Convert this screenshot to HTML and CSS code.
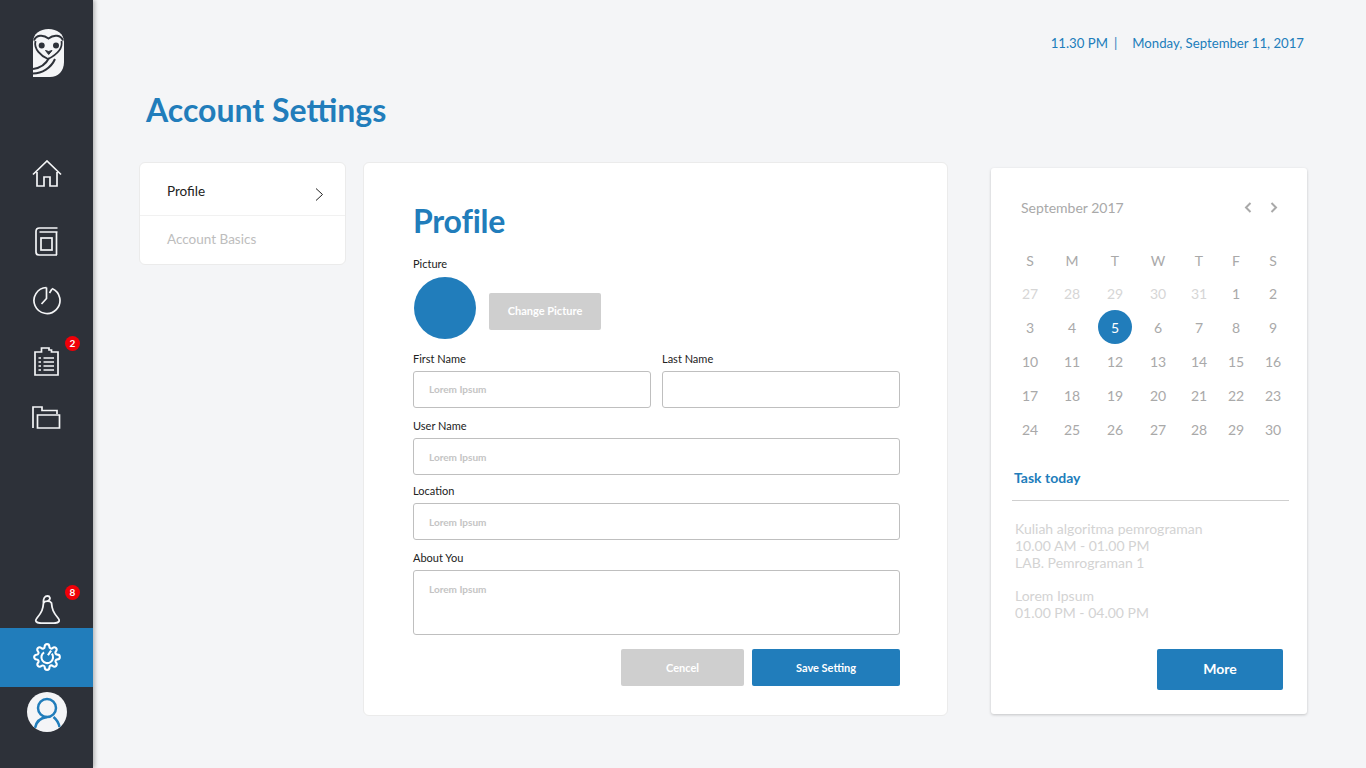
FILE: index.html
```html
<!DOCTYPE html>
<html lang="en">
<head>
    <meta charset="UTF-8">
    <title>Account Settings</title>
    <link rel="stylesheet" href="styles.css">
</head>
<body>
    <div class="app">
        <!-- Sidebar -->
        <aside class="sidebar">
            <div class="logo">
                <svg width="32" height="48" viewBox="0 0 32 48">
                    <path d="M0 13C0 5 7 0 15.500 0S31 5 31 13V33C31 42 25 48 17 48H0Z" fill="#f4f5f7"/>
                    <path d="M1 11.500C3 6 10 5 15.500 9.500C21 5 28 6 30 11.500" fill="none" stroke="#2d3139" stroke-width="2"/>
                    <path d="M2.500 12C0.500 20 8 27 15 30C23 26 30 20 28.500 12" fill="none" stroke="#2d3139" stroke-width="1.800"/>
                    <circle cx="8.700" cy="16.500" r="3" fill="#2d3139"/>
                    <circle cx="23" cy="16.500" r="3" fill="#2d3139"/>
                    <path d="M12.500 21.500L15.700 25.500L19 21.500L15.700 22.500Z" fill="#2d3139" stroke="#2d3139" stroke-linejoin="round"/>
                    <path d="M0 40C7 39 13 35 16 29M0 44.500C9 44.500 18 39 22 30" fill="none" stroke="#2d3139" stroke-width="2"/>
                </svg>
            </div>
            <nav class="nav-top">
                <a class="nav-item nav-home">
                    <svg width="30" height="27" viewBox="0 0 30 27" fill="none" stroke="#f4f5f7" stroke-width="1.700">
                        <path d="M1 14.500L15 1L29 14.500M5 12V26H12V17H18V26H25V12"/>
                    </svg>
                </a>
                <a class="nav-item nav-book">
                    <svg width="23" height="29" viewBox="0 0 23 29" fill="none" stroke="#f4f5f7" stroke-width="1.700">
                        <path d="M22.500 1H4.500C2 1 1 2.500 1 4.500V25C1 27 2.500 28 4 28H22M22.500 5H4.500M21.500 5V28"/>
                        <rect x="6" y="11" width="11" height="12"/>
                    </svg>
                </a>
                <a class="nav-item nav-clock">
                    <svg width="29" height="29" viewBox="0 0 29 29" fill="none" stroke="#f4f5f7" stroke-width="1.700">
                        <path d="M20 2.500A13 13 0 1 1 14.500 1.500"/>
                        <path d="M14.500 1.500V12.500L9.500 18M20 3L17.500 7"/>
                    </svg>
                </a>
                <a class="nav-item nav-tasks">
                    <svg width="25" height="29" viewBox="0 0 25 29" fill="none" stroke="#f4f5f7" stroke-width="1.700">
                        <path d="M7.500 5H1V28H24V5H17.500V3H15V1H7.500Z"/>
                        <path d="M9.500 11H20M9.500 15H20M9.500 19H20M9.500 23H20M4.500 11H7M4.500 15H7M4.500 19H7M4.500 23H7"/>
                    </svg>
                    <span class="badge badge-tasks">2</span>
                </a>
                <a class="nav-item nav-folder">
                    <svg width="29" height="23" viewBox="0 0 29 23" fill="none" stroke="#f4f5f7" stroke-width="1.700">
                        <path d="M1 22V1H10V4.500H25V8M27 9H5.500V22H27.500V9Z"/>
                    </svg>
                </a>
            </nav>
            <div class="nav-bottom">
                <a class="nav-bell">
                    <svg width="26" height="29" viewBox="-1 0 26 29" fill="none" stroke="#f4f5f7" stroke-width="1.800" stroke-linecap="round">
                        <path d="M8.500 8C8 14 7 17 2 23C-0.500 26 1 28 6 28.200H19C24 28 25.500 26 23 23C18 17 17 14 16.500 8C15 5.500 10 5.500 8.500 8C8 3 10 1 12.500 1C15 1 16 4 13.500 5.500"/>
                    </svg>
                    <span class="badge badge-bell">8</span>
                </a>
                <a class="nav-gear">
                    <svg width="28" height="28" viewBox="0 0 24 24" fill="none" stroke="#fff" stroke-width="1.800">
                        <path d="M19.400 15a1.650 1.650 0 0 0 .33 1.820l.06.06a2 2 0 0 1 0 2.830 2 2 0 0 1-2.830 0l-.06-.06a1.650 1.650 0 0 0-1.820-.33 1.650 1.650 0 0 0-1 1.510V21a2 2 0 0 1-2 2 2 2 0 0 1-2-2v-.09A1.650 1.650 0 0 0 9 19.400a1.650 1.650 0 0 0-1.820.33l-.06.06a2 2 0 0 1-2.830 0 2 2 0 0 1 0-2.830l.06-.06a1.650 1.650 0 0 0 .33-1.820 1.650 1.650 0 0 0-1.510-1H3a2 2 0 0 1-2-2 2 2 0 0 1 2-2h.09A1.650 1.650 0 0 0 4.600 9a1.650 1.650 0 0 0-.33-1.820l-.06-.06a2 2 0 0 1 0-2.830 2 2 0 0 1 2.830 0l.06.06a1.650 1.650 0 0 0 1.820.33H9a1.650 1.650 0 0 0 1-1.510V3a2 2 0 0 1 2-2 2 2 0 0 1 2 2v.09a1.650 1.650 0 0 0 1 1.510 1.650 1.650 0 0 0 1.820-.33l.06-.06a2 2 0 0 1 2.830 0 2 2 0 0 1 0 2.830l-.06.06a1.650 1.650 0 0 0-.33 1.820V9a1.650 1.650 0 0 0 1.510 1H21a2 2 0 0 1 2 2 2 2 0 0 1-2 2h-.09a1.650 1.650 0 0 0-1.510 1z"/>
                        <path d="M9.500 8A5 5 0 1 0 16.200 9.200M15.500 6.500L12.800 10.500"/>
                    </svg>
                </a>
                <a class="nav-avatar">
                    <svg width="40" height="40" viewBox="0 0 40 40" fill="none" stroke="#217dbb" stroke-width="2.500">
                        <circle cx="20" cy="16" r="9"/>
                        <path d="M8 36C9 30 13 26 20 25M26.500 25C29 27 31.500 30 32.500 35"/>
                    </svg>
                </a>
            </div>
        </aside>

        <!-- Main content -->
        <main class="content">
            <div class="datetime">
                <span>11.30 PM</span><span class="datetime-sep">|</span><span>Monday, September 11, 2017</span>
            </div>
            <h1 class="page-title">Account Settings</h1>

            <div class="columns">
                <!-- Settings menu -->
                <div class="menu-card">
                    <div class="menu-item menu-active">
                        <span>Profile</span>
                        <svg width="9" height="13" viewBox="0 0 9 13" fill="none" stroke="#222" stroke-width="1">
                            <path d="M1 0.500L7.500 6.500L1 12.500"/>
                        </svg>
                    </div>
                    <div class="menu-item menu-basics">Account Basics</div>
                </div>

                <!-- Profile form -->
                <section class="form-card">
                    <h2 class="form-title">Profile</h2>
                    <label class="field-label label-picture">Picture</label>
                    <div class="picture-row">
                        <div class="picture"></div>
                        <button class="btn btn-grey btn-change">Change Picture</button>
                    </div>
                    <div class="field-pair">
                        <div>
                            <label class="field-label">First Name</label>
                            <div class="input">Lorem Ipsum</div>
                        </div>
                        <div>
                            <label class="field-label">Last Name</label>
                            <div class="input"></div>
                        </div>
                    </div>
                    <label class="field-label label-user">User Name</label>
                    <div class="input">Lorem Ipsum</div>
                    <label class="field-label label-location">Location</label>
                    <div class="input">Lorem Ipsum</div>
                    <label class="field-label label-about">About You</label>
                    <div class="input textarea">Lorem Ipsum</div>
                    <div class="form-actions">
                        <button class="btn btn-grey btn-cancel">Cencel</button>
                        <button class="btn btn-blue btn-save">Save Setting</button>
                    </div>
                </section>

                <!-- Calendar and tasks -->
                <aside class="side-card">
                    <div class="cal-head">
                        <span class="cal-month">September 2017</span>
                        <span class="cal-arrows">
                            <svg width="8" height="11" viewBox="0 0 8 11" fill="none" stroke="#a9a9a9" stroke-width="2"><path d="M6.500 1L2 5.500L6.500 10"/></svg>
                            <svg width="8" height="11" viewBox="0 0 8 11" fill="none" stroke="#a9a9a9" stroke-width="2"><path d="M1.500 1L6 5.500L1.500 10"/></svg>
                        </span>
                    </div>
                    <div class="cal-grid" id="calGrid"></div>

                    <h3 class="task-title">Task today</h3>
                    <div class="task-list">
                        <p>Kuliah algoritma pemrograman<br>10.00 AM - 01.00 PM<br>LAB. Pemrograman 1</p>
                        <p>Lorem Ipsum<br>01.00 PM - 04.00 PM</p>
                    </div>
                    <div class="side-actions">
                        <button class="btn btn-blue btn-more">More</button>
                    </div>
                </aside>
            </div>
        </main>
    </div>

    <script>
        // Build the calendar cells
        const calGrid = document.getElementById("calGrid");
        const addCell = (text, cls) => {
            const cell = document.createElement("span");
            cell.className = "cal-cell " + cls;
            cell.textContent = text;
            calGrid.appendChild(cell);
        };
        ["S", "M", "T", "W", "T", "F", "S"].forEach(d => addCell(d, "cal-day"));
        [27, 28, 29, 30, 31].forEach(d => addCell(d, "cal-off"));
        for (let d = 1; d <= 30; d++) {
            addCell(d, d === 5 ? "cal-today" : "");
        }
    </script>
</body>
</html>
```

FILE: styles.css
```css
/* Global Styles */
* {
    box-sizing: border-box;
}

body {
    margin: 0;
    background: #f4f5f7;
    font-family: "Lato", "Open Sans", sans-serif;
    color: #222;
}

.app {
    display: flex;
    height: 768px;
    overflow: hidden;
}

/* Sidebar */
.sidebar {
    width: 93px;
    flex-shrink: 0;
    display: flex;
    flex-direction: column;
    background: #2d3139;
    box-shadow: 2px 0 4px rgba(0, 0, 0, 0.25);
}

.logo {
    height: 143px;
    padding: 29px 0 0 33px;
}

.logo svg {
    display: block;
}

.nav-top {
    display: flex;
    flex-direction: column;
}

.nav-item {
    position: relative;
    display: flex;
    align-items: center;
    justify-content: center;
}

.nav-home {
    height: 60px;
}

.nav-book {
    height: 76px;
}

.nav-clock {
    height: 43px;
}

.nav-tasks {
    height: 78px;
}

.nav-folder {
    height: 34px;
}

.nav-bottom {
    margin-top: auto;
    display: flex;
    flex-direction: column;
    align-items: center;
    padding-bottom: 36px;
}

.nav-bell {
    position: relative;
    height: 36px;
    padding-top: 3px;
    align-self: stretch;
    display: flex;
    justify-content: center;
}

.nav-gear {
    align-self: stretch;
    height: 59px;
    padding-bottom: 2px;
    display: flex;
    align-items: center;
    justify-content: center;
    background: #217dbb;
}

.nav-avatar {
    width: 40px;
    height: 40px;
    margin-top: 5px;
    border-radius: 50%;
    background: #f4f5f7;
    overflow: hidden;
}

.nav-avatar svg {
    display: block;
}

.badge {
    position: absolute;
    width: 15px;
    height: 15px;
    border-radius: 50%;
    background: #f00008;
    color: #fff;
    font-size: 10px;
    font-weight: 700;
    line-height: 15px;
    text-align: center;
}

.badge-tasks {
    top: 14px;
    left: 65px;
}

.badge-bell {
    top: -7px;
    left: 65px;
}

/* Main content */
.content {
    flex: 1;
    padding: 35px 59px 0 46px;
}

.datetime {
    display: flex;
    justify-content: flex-end;
    color: #217dbb;
    font-size: 13.200px;
    line-height: 17px;
    padding-right: 3px;
}

.datetime-sep {
    margin: 0 15px 0 6px;
}

.page-title {
    margin: 36px 0 30px 7px;
    color: #217dbb;
    font-size: 32px;
    font-weight: 700;
    line-height: 44px;
}

.columns {
    display: flex;
    align-items: flex-start;
}

/* Settings menu */
.menu-card {
    width: 207px;
    height: 103px;
    margin-right: 17px;
    background: #fff;
    border: 1px solid #ebebeb;
    border-radius: 6px;
}

.menu-item {
    padding: 0 21px 0 27px;
    display: flex;
    align-items: center;
    justify-content: space-between;
    color: #bdbdbd;
    font-size: 13.500px;
}

.menu-active {
    height: 53px;
    padding-top: 3px;
    color: #222;
    border-bottom: 1px solid #f1f1f1;
}

.menu-active svg {
    margin-top: 7px;
}

.menu-basics {
    height: 49px;
    padding-bottom: 3px;
}

/* Profile form */
.form-card {
    width: 585px;
    height: 554px;
    margin-right: 43px;
    padding: 39px 47px 0 49px;
    background: #fff;
    border: 1px solid #ebebeb;
    border-radius: 6px;
}

.form-title {
    margin: 0;
    color: #217dbb;
    font-size: 32px;
    font-weight: 700;
    line-height: 38px;
    letter-spacing: -0.200px;
}

.field-label {
    display: block;
    height: 15px;
    margin-bottom: 5px;
    color: #222;
    font-size: 11px;
    line-height: 15px;
}

.label-picture {
    margin: 16px 0 6px;
}

.picture-row {
    display: flex;
    align-items: flex-start;
    height: 62px;
    margin: 0 0 12px 1px;
}

.picture {
    width: 62px;
    height: 62px;
    border-radius: 50%;
    background: #217dbb;
}

.btn {
    border: none;
    border-radius: 2px;
    color: #fff;
    font-family: inherit;
    font-size: 11px;
    font-weight: 700;
    padding: 0;
}

.btn-grey {
    background: #cfcfcf;
}

.btn-blue {
    background: #217dbb;
}

.btn-change {
    width: 112px;
    height: 37px;
    margin: 16px 0 0 13px;
    padding-bottom: 2px;
}

.field-pair {
    display: flex;
    gap: 11px;
}

.field-pair > div {
    flex: 1;
}

.input {
    height: 37px;
    padding-left: 15px;
    background: #fff;
    border: 1px solid #bfbfbf;
    border-radius: 3px;
    color: #c4c4c4;
    font-size: 10px;
    font-weight: 700;
    line-height: 36px;
}

.field-pair .input {
    line-height: 34px;
}

.label-user {
    margin-top: 10px;
}

.label-location {
    margin-top: 8px;
}

.label-about {
    margin-top: 10px;
}

.textarea {
    height: 65px;
}

.form-actions {
    display: flex;
    justify-content: flex-end;
    gap: 8px;
    margin-top: 14px;
}

.btn-cancel {
    width: 123px;
    height: 37px;
}

.btn-save {
    width: 148px;
    height: 37px;
}

/* Calendar card */
.side-card {
    width: 316px;
    height: 546px;
    margin-top: 6px;
    padding: 29px 18px 0 21px;
    background: #fff;
    border-radius: 3px;
    box-shadow: 0 1px 3px rgba(0, 0, 0, 0.2);
}

.cal-head {
    display: flex;
    align-items: center;
    justify-content: space-between;
    height: 20px;
    padding: 0 11px 0 9px;
}

.cal-month {
    color: #a9a9a9;
    font-size: 14px;
}

.cal-arrows {
    display: flex;
    gap: 18px;
}

.cal-grid {
    display: grid;
    grid-template-columns: 42px 42px 44px 42px 40px 34px 40px;
    grid-template-rows: 32px;
    grid-auto-rows: 34px;
    margin: 27px 0 0 -3px;
}

.cal-cell {
    display: flex;
    align-items: center;
    justify-content: center;
    color: #a9a9a9;
    font-size: 14px;
}

.cal-off {
    color: #d6d6d6;
}

.cal-today {
    width: 34px;
    height: 34px;
    justify-self: center;
    border-radius: 50%;
    background: #217dbb;
    color: #fff;
}

.task-title {
    margin: 23px 0 0;
    padding: 0 0 14px 2px;
    border-bottom: 1px solid #cfcfcf;
    color: #217dbb;
    font-size: 14px;
    font-weight: 700;
    line-height: 17px;
}

.task-list {
    margin: 19px 0 0 3px;
    color: #d3d3d3;
    font-size: 14px;
    line-height: 17px;
}

.task-list p {
    margin: 0 0 16px;
}

.side-actions {
    display: flex;
    justify-content: flex-end;
    margin-top: 28px;
    margin-right: 6px;
}

.btn-more {
    width: 126px;
    height: 41px;
    padding-bottom: 3px;
    font-size: 14px;
}
```
